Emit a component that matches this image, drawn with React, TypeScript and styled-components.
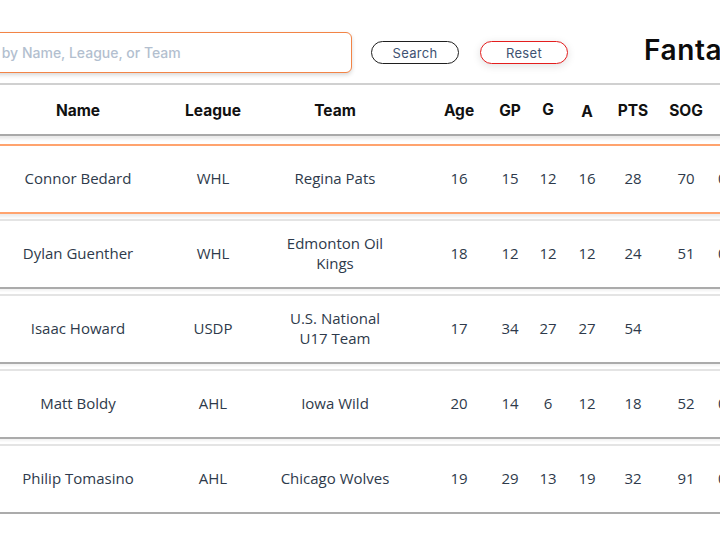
import React from "react";
import styled, { createGlobalStyle } from "styled-components";

const GlobalStyle = createGlobalStyle`
  html, body {
    margin: 0;
    padding: 0;
    background: #ffffff;
    overflow: hidden;
  }
  body {
    font-family: "Open Sans", "Noto Sans", sans-serif;
  }
`;

const Page = styled.div`
  width: 900px;
  margin-left: -60px;
  padding-top: 32px;
  display: flex;
  flex-direction: column;
`;

const TopBar = styled.div`
  display: flex;
  align-items: center;
  height: 41px;
  & > * {
    flex-shrink: 0;
  }
`;

const SearchInput = styled.input`
  box-sizing: border-box;
  width: 412px;
  height: 41px;
  padding: 0 10px;
  border: 1px solid #f28446;
  border-radius: 6px;
  box-shadow: 0 2px 4px rgba(0, 0, 0, 0.16);
  font-family: "Inter", "Lato", sans-serif;
  font-weight: 500;
  font-size: 14px;
  color: #333;
  outline: none;
  &::placeholder {
    color: #b3bfcf;
  }
`;

const PillButton = styled.button<{ $tone: "dark" | "red"; $gap: number }>`
  box-sizing: border-box;
  margin-left: ${(p) => p.$gap}px;
  width: 88px;
  height: 23px;
  border-radius: 12px;
  background: #fff;
  border: 1.5px solid ${(p) => (p.$tone === "red" ? "#e41e1e" : "#1f1f1f")};
  box-shadow: ${(p) => (p.$tone === "red" ? "0 2px 8px rgba(0,0,0,0.12)" : "none")};
  font-family: "Inter", "Lato", sans-serif;
  font-size: 13px;
  letter-spacing: 0.3px;
  color: #3e5272;
  padding: 0;
  cursor: pointer;
`;

const Title = styled.h1`
  margin: 0 0 6px 76px;
  font-family: "Inter", "Lato", sans-serif;
  font-weight: 600;
  font-size: 28px;
  letter-spacing: 0.6px;
  color: #0c0c0c;
  white-space: nowrap;
`;

const Table = styled.div`
  margin-top: 10px;
  display: flex;
  flex-direction: column;
  gap: 5px;
`;

const COLS = "140px 130px 114px 98px 40px 36px 42px 50px 56px 46px 60px";

const HeaderRow = styled.div`
  box-sizing: border-box;
  display: grid;
  grid-template-columns: ${COLS};
  align-items: center;
  padding-left: 68px;
  height: 53px;
  border-top: 2px solid #d0d0d0;
  border-bottom: 2px solid #a9a9a9;
  box-shadow: 0 3px 3px rgba(0, 0, 0, 0.09);
  margin-bottom: 3px;
`;

const HeadCell = styled.div<{ $drop?: number }>`
  text-align: center;
  font-family: "Inter", "Lato", sans-serif;
  font-weight: 700;
  font-size: 15.5px;
  color: #111;
  padding-top: ${(p) => p.$drop ?? 0}px;
  &:nth-child(4) {
    padding-left: 36px;
  }
`;

const Row = styled.div<{ $active?: boolean }>`
  box-sizing: border-box;
  display: grid;
  grid-template-columns: ${COLS};
  align-items: center;
  padding-left: 68px;
  height: 70px;
  border-top: 2px solid ${(p) => (p.$active ? "#ffa36e" : "#e4e4e4")};
  border-bottom: 2px solid ${(p) => (p.$active ? "#ffa36e" : "#ababab")};
  box-shadow: ${(p) =>
    p.$active ? "0 3px 3px rgba(0,0,0,0.08)" : "0 2px 2px rgba(0,0,0,0.05)"};
`;

const Cell = styled.div`
  text-align: center;
  font-size: 15px;
  line-height: 20px;
  color: #2e3a4b;
  padding-bottom: 2px;
  white-space: pre-line;
  &:nth-child(4) {
    padding-left: 36px;
  }
`;

type Player = {
  name: string;
  league: string;
  team: string;
  age: number;
  gp: number;
  g: number;
  a: number;
  pts: number;
  sog?: number;
};

const players: Player[] = [
  { name: "Connor Bedard", league: "WHL", team: "Regina Pats", age: 16, gp: 15, g: 12, a: 16, pts: 28, sog: 70 },
  { name: "Dylan Guenther", league: "WHL", team: "Edmonton Oil Kings", age: 18, gp: 12, g: 12, a: 12, pts: 24, sog: 51 },
  { name: "Isaac Howard", league: "USDP", team: "U.S. National U17 Team", age: 17, gp: 34, g: 27, a: 27, pts: 54 },
  { name: "Matt Boldy", league: "AHL", team: "Iowa Wild", age: 20, gp: 14, g: 6, a: 12, pts: 18, sog: 52 },
  { name: "Philip Tomasino", league: "AHL", team: "Chicago Wolves", age: 19, gp: 29, g: 13, a: 19, pts: 32, sog: 91 },
];

const headers = ["Name", "League", "Team", "Age", "GP", "G", "A", "PTS", "SOG", "S%"];

export default function App() {
  return (
    <>
      <GlobalStyle />
      <Page>
        <TopBar>
          <SearchInput placeholder="Search by Name, League, or Team" />
          <PillButton $tone="dark" $gap={19}>Search</PillButton>
          <PillButton $tone="red" $gap={21}>Reset</PillButton>
          <Title>Fantasy Hockey Prospects</Title>
        </TopBar>
        <Table>
          <HeaderRow>
            {headers.map((h) => (
              <HeadCell key={h} $drop={h === "A" ? 3 : h === "G" ? 0 : 1}>
                {h}
              </HeadCell>
            ))}
          </HeaderRow>
          {players.map((p, i) => (
            <Row key={p.name} $active={i === 0}>
              <Cell>{p.name}</Cell>
              <Cell>{p.league}</Cell>
              <Cell>{p.team}</Cell>
              <Cell>{p.age}</Cell>
              <Cell>{p.gp}</Cell>
              <Cell>{p.g}</Cell>
              <Cell>{p.a}</Cell>
              <Cell>{p.pts}</Cell>
              <Cell>{p.sog ?? ""}</Cell>
              <Cell>{p.sog ? (p.g / p.sog).toFixed(3) : ""}</Cell>
            </Row>
          ))}
        </Table>
      </Page>
    </>
  );
}
